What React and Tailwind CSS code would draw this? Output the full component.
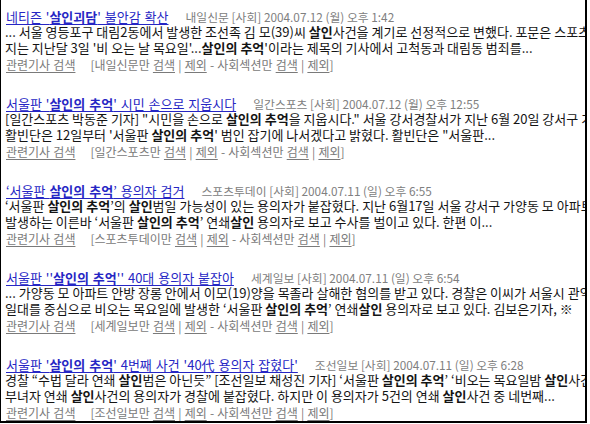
import React from "react";

const items = [
  {
    title: [["네티즌 '"], ["살인괴담", 1], ["' 불안감 확산"]],
    source: "내일신문 [사회] 2004.07.12 (월) 오후 1:42",
    l1: [["... 서울 영등포구 대림2동에서 발생한 조선족 김 모(39)씨 "], ["살인", 1], ["사건을 계기로 선정적으로 변했다. 포문은 스포츠투데이"]],
    l2: [["지는 지난달 3일 '비 오는 날 목요일'..."], ["살인의 추억", 1], ["'이라는 제목의 기사에서 고척동과 대림동 범죄를..."]],
    paper: "내일신문",
  },
  {
    title: [["서울판 '"], ["살인의 추억", 1], ["' 시민 손으로 지웁시다"]],
    source: "일간스포츠 [사회] 2004.07.12 (월) 오후 12:55",
    l1: [["[일간스포츠 박동준 기자] \"시민을 손으로 "], ["살인의 추억", 1], ["을 지웁시다.\" 서울 강서경찰서가 지난 6월 20일 강서구 가양동"]],
    l2: [["활빈단은 12일부터 '서울판 "], ["살인의 추억", 1], ["' 범인 잡기에 나서겠다고 밝혔다. 활빈단은 \"서울판..."]],
    paper: "일간스포츠",
  },
  {
    title: [["‘서울판 "], ["살인의 추억", 1], ["’ 용의자 검거"]],
    source: "스포츠투데이 [사회] 2004.07.11 (일) 오후 6:55",
    l1: [["‘서울판 "], ["살인의 추억", 1], ["’의 "], ["살인", 1], ["범일 가능성이 있는 용의자가 붙잡혔다. 지난 6월17일 서울 강서구 가양동 모 아파트"]],
    l2: [["발생하는 이른바 ‘서울판 "], ["살인의 추억", 1], ["’ 연쇄"], ["살인", 1], [" 용의자로 보고 수사를 벌이고 있다. 한편 이..."]],
    paper: "스포츠투데이",
  },
  {
    title: [["서울판 ''"], ["살인의 추억", 1], ["'' 40대 용의자 붙잡아"]],
    source: "세계일보 [사회] 2004.07.11 (일) 오후 6:54",
    l1: [["... 가양동 모 아파트 안방 장롱 안에서 이모(19)양을 목졸라 살해한 혐의를 받고 있다. 경찰은 이씨가 서울시 관악구"]],
    l2: [["일대를 중심으로 비오는 목요일에 발생한 ‘서울판 "], ["살인의 추억", 1], ["’ 연쇄"], ["살인", 1], [" 용의자로 보고 있다. 김보은기자, ※"]],
    paper: "세계일보",
  },
  {
    title: [["서울판 '"], ["살인의 추억", 1], ["' 4번째 사건 '40代 용의자 잡혔다'"]],
    source: "조선일보 [사회] 2004.07.11 (일) 오후 6:28",
    l1: [["경찰 “수법 달라 연쇄 "], ["살인", 1], ["범은 아닌듯” [조선일보 채성진 기자] ‘서울판 "], ["살인의 추억", 1], ["’ ‘비오는 목요일밤 "], ["살인", 1], ["사건"]],
    l2: [["부녀자 연쇄 "], ["살인", 1], ["사건의 용의자가 경찰에 붙잡혔다. 하지만 이 용의자가 5건의 연쇄 "], ["살인", 1], ["사건 중 네번째..."]],
    paper: "조선일보",
  },
];

function Rich({ parts }) {
  return parts.map((p, i) =>
    p[1] ? (
      <b key={i} className="font-bold">
        {p[0]}
      </b>
    ) : (
      <span key={i}>{p[0]}</span>
    )
  );
}

function Item({ it }) {
  return (
    <div className="h-[87px] shrink-0">
      <div className="flex items-baseline whitespace-nowrap leading-[15px] pl-px">
        <a className="text-[13px] [word-spacing:1px] text-[#2626c4] underline underline-offset-2 decoration-[#2626c4]">
          <Rich parts={it.title} />
        </a>
        <span className="ml-[17px] text-[11.8px] text-[#808080]">{it.source}</span>
      </div>
      <div className="text-[13px] leading-[15.5px] text-[#141414] whitespace-nowrap">
        <div>
          <Rich parts={it.l1} />
        </div>
        <div>
          <Rich parts={it.l2} />
        </div>
      </div>
      <div className="mt-[2px] pl-px text-[12px] [word-spacing:0.5px] leading-[15px] text-[#7a7a7a] whitespace-nowrap">
        <span className="underline underline-offset-2">관련기사 검색</span>
        <span className="ml-[15px]">[{it.paper}만 </span>
        <span className="underline underline-offset-2">검색</span>
        <span> | </span>
        <span className="underline underline-offset-2">제외</span>
        <span> - 사회섹션만 </span>
        <span className="underline underline-offset-2">검색</span>
        <span> | </span>
        <span className="underline underline-offset-2">제외</span>
        <span>]</span>
      </div>
    </div>
  );
}

export default function App() {
  return (
    <div
      className="w-[590px] h-[424px] bg-white overflow-hidden"
      style={{ fontFamily: '"Noto Sans CJK KR", "Noto Sans", sans-serif' }}
    >
      <div className="w-[587px] h-[423px] border-l border-r-2 border-b-2 border-black overflow-hidden pl-[4px] pt-[9px] flex flex-col">
        {items.map((it, i) => (
          <Item key={i} it={it} />
        ))}
      </div>
    </div>
  );
}
